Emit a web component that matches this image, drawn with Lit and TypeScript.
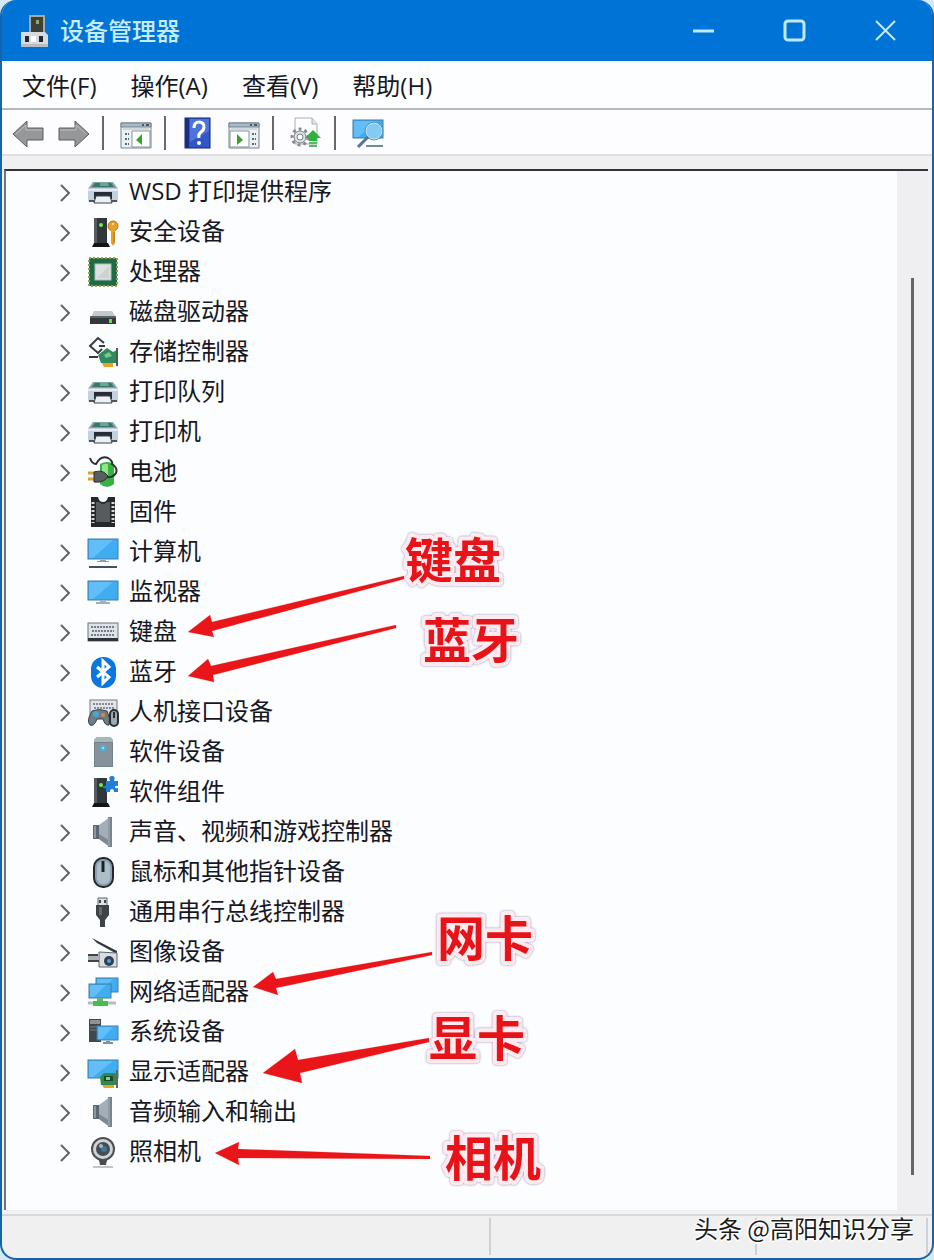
import { LitElement, html, css, svg, type TemplateResult, type SVGTemplateResult } from "lit";
import { customElement, property } from "lit/decorators.js";

const printer = svg`
  <path d="M6 6h20l5 7H1z" fill="#7fa5a3"/><path d="M8 7h16l3 4H5z" fill="#3f7269"/><path d="M13 7h8l1 3h-9z" fill="#5fae8f"/>
  <path d="M1 13q0-1 1-1h28q1 0 1 1v11q0 2-2 2H3q-2 0-2-2z" fill="#c3d1dc"/>
  <path d="M1 14h30" stroke="#e3ebf1" stroke-width="2"/><path d="M2 25h5M25 25h5" stroke="#4c565e" stroke-width="2"/>
  <path d="M7 16h18v7H7z" fill="#262d34"/><path d="M9 20h14l2 7H7z" fill="#eef2f6" stroke="#39424a"/>`;

const screen = (x: number, y: number, w: number, h: number) => svg`
  <rect x=${x} y=${y} width=${w} height=${h} fill="#41adf1" stroke="#3f7da6"/>
  <path d="M${x + 1} ${y + 1}h${w - 6}l-${w - 10} ${h - 2}h-4z" fill="#62bef8"/>`;

const card = svg`
  <path d="M13 21l4-4h11l2 2v10H14z" fill="#2f8a4f"/><path d="M30 14v18" stroke="#5d6a5d" stroke-width="2"/>
  <path d="M17 20h9v5h-9z" fill="#1d4630"/><path d="M19 21h4v3h-4z" fill="#7ed08c"/>
  <path d="M15 29h12v3H17z" fill="#e5a423"/>`;

const tower = svg`
  <path d="M7 2h13v25H7z" fill="#31373b"/><path d="M7 2h3v25H7z" fill="#565d62"/>
  <path d="M7 27h14l2 4H5z" fill="#121518"/><circle cx="14" cy="9" r="2" fill="#6bf23e"/>`;

const speaker = svg`
  <path d="M6 9h6L23 1v30l-11-8H6z" fill="#a3aeb8"/><path d="M6 9h6v14H6z" fill="#5b6874"/><path d="M8 10v12" stroke="#8c98a3" stroke-width="2"/>
  <path d="M12 18l11 7v6l-11-8z" fill="#7d8892"/><path d="M21 1h4v30h-4z" fill="#77828c"/><path d="M22 2v28" stroke="#aeb7bf"/>`;

const keys = svg`
  <rect x="1" y="7" width="30" height="18" fill="#dfe3e8" stroke="#6c7580"/>
  <path d="M4 11h24M5 15h22M4 19h24" stroke="#747d88" stroke-width="2" stroke-dasharray="2 1"/>
  <path d="M1 22h30v3H1z" fill="#2c333b"/>`;

const icons: Record<string, SVGTemplateResult> = {
  printer,
  security: svg`${tower}
    <circle cx="26" cy="10" r="5" fill="#e7a02b" stroke="#b97614"/><circle cx="26" cy="8" r="1" fill="#fff2c9"/>
    <path d="M24 14h4v13l-2 3-2-3z" fill="#e7a02b"/><path d="M27 16v11" stroke="#b97614"/>`,
  cpu: svg`
    <rect x="2" y="2" width="28" height="28" fill="#1f6b48"/>
    <rect x="2" y="2" width="28" height="28" fill="none" stroke="#9aa24c" stroke-width="2" stroke-dasharray="2 2"/>
    <rect x="8" y="8" width="16" height="16" fill="#dfe0e1" stroke="#a7c7b2"/><path d="M10 22L22 10v12z" fill="#cfd2d4"/>`,
  disk: svg`
    <path d="M7 15h18l4 6H4z" fill="#c2c8cc"/><path d="M3 20h26v8H3z" fill="#31393c"/>
    <path d="M3 20h26v2H3z" fill="#59646a"/><path d="M22 23h3v4h-3z" fill="#67dd5a"/>`,
  storage: svg`
    <path d="M17 7l-6-5-8 8 8 7 4-4M12 10h6" fill="none" stroke="#333a40" stroke-width="2"/>
    <path d="M2 21h9" stroke="#333a40" stroke-width="2"/><path d="M11 19l9-7 6 4 4-2v13H14z" fill="#2f8a5e"/>
    <path d="M17 19l5-3 3 4-6 2z" fill="#7cc59c"/><path d="M30 12v18" stroke="#4c5a50" stroke-width="2"/>
    <path d="M15 27h11v4H17z" fill="#e5a423"/>`,
  battery: svg`
    <path d="M13 8q7-4 14 0v20q-7 6-14 0z" fill="#37b13f"/><path d="M15 9q3-2 6-1v11h-6z" fill="#8fe388"/>
    <path d="M3 2q2 6 6 6Q14-1 21 2q5 3 4 6 6 4 4 9-3 5-9 4" fill="none" stroke="#2b3135" stroke-width="2"/>
    <path d="M1 17h7M1 23h7" stroke="#d6a62a" stroke-width="3"/><path d="M7 16q7-2 11 1l3 3-3 4q-5 3-11 2z" fill="#585f63" stroke="#2a2f33"/>`,
  firmware: svg`
    <path d="M4 1h7q1 5 5 5t5-5h7v30H4z" fill="#26292c"/><path d="M9 6h3q4 4 8 0h3v20H9z" fill="#575b5e"/>
    <path d="M6 6v21M26 6v21" stroke="#d6dadd" stroke-width="3" stroke-dasharray="2 2"/>`,
  computer: svg`${screen(1, 3, 30, 20)}<path d="M13 24h6v1h3v1H10v-1h3z" fill="#8aa0ae"/><path d="M2 31h28" stroke="#40525f" stroke-width="2"/>`,
  monitor: svg`${screen(1, 5, 30, 19)}<path d="M13 25h6v1h4v2H9v-2h4z" fill="#a2b0ba"/>`,
  keyboard: keys,
  bluetooth: svg`
    <rect x="4" y="1" width="25" height="31" rx="12" fill="#0a76e0"/>
    <path d="M10 11l12 10-6 6V5l6 6-12 10" fill="none" stroke="#fff" stroke-width="3"/>`,
  hid: svg`
    <rect x="3" y="4" width="27" height="15" fill="#e2e5e8" stroke="#757d86"/>
    <path d="M6 8h21M7 12h20" stroke="#838b94" stroke-width="2" stroke-dasharray="2 1"/>
    <path d="M5 15q7-3 15 0 4 8 2 14-4 1-6-6h-6q-3 8-7 6-4-4 2-14z" fill="#717b85" stroke="#3a4249"/>
    <circle cx="9" cy="18" r="3" fill="#49a5d8"/><circle cx="16" cy="19" r="2" fill="#e0843a"/>
    <rect x="23" y="14" width="8" height="16" rx="4" fill="#9ea8b1" stroke="#272e34" stroke-width="2"/><path d="M27 16v6" stroke="#272e34" stroke-width="2"/>`,
  software: svg`
    <path d="M7 4l3-3h13l3 3v27H7z" fill="#75818a"/><path d="M7 4l3-3h13l3 3v2H7z" fill="#aab4bb"/>
    <path d="M8 7h17v23H8z" fill="#87939c"/><circle cx="16" cy="12" r="3" fill="#42b8e2"/><circle cx="16" cy="12" r="1" fill="#b8effd"/>`,
  component: svg`${tower}
    <path d="M19 5h4q-2-5 2-5t2 5h4v5q-3-1-3 1t3 1v4h-4q0-3-2-3t-2 3h-4v-4q-3 1-3-1t3-1z" fill="#1f7fd6"/>`,
  speaker,
  mouse: svg`
    <rect x="7" y="2" width="19" height="29" rx="9" fill="#8d9eac" stroke="#20272d" stroke-width="2"/>
    <rect x="10" y="5" width="13" height="23" rx="6" fill="#aebdca"/><path d="M16 5v11" stroke="#1c2227" stroke-width="3"/>`,
  usb: svg`
    <path d="M11 2h9v8h-9z" fill="#dfe3e6" stroke="#5e666d"/><path d="M13 4v3M18 4v3" stroke="#3d444a" stroke-width="2"/>
    <path d="M9 9h13v10l-4 5v7h-5v-7l-4-5z" fill="#3d4347"/><path d="M12 11h3v8h-3z" fill="#656c71"/>`,
  imaging: svg`
    <path d="M5 2l25 13v3L10 7z" fill="#34393d"/><path d="M12 16l18 1v14H12z" fill="#d9dde0" stroke="#5d656b"/>
    <path d="M1 19h11v6H1z" fill="#aab1b7"/><path d="M1 19h10M1 25h11" stroke="#3e454b" stroke-width="2"/>
    <circle cx="22" cy="25" r="5" fill="#2d4055"/><circle cx="22" cy="25" r="2" fill="#5f9cd0"/>`,
  network: svg`${screen(9, 2, 22, 14)}${screen(2, 8, 22, 14)}
    <path d="M10 22h6v3h-6z" fill="#69b573"/><path d="M1 27h28" stroke="#b3beb9" stroke-width="3"/><path d="M6 25h15v5H6z" fill="#45bf48"/>`,
  system: svg`
    <path d="M2 3h12v23H2z" fill="#41474b"/><path d="M3 4h10v4H3z" fill="#8b9690"/><path d="M3 11h10M3 14h7" stroke="#7a8286" stroke-width="1"/>
    ${screen(10, 10, 21, 14)}<path d="M19 25h4v1h3v2H16v-2h3z" fill="#7b92a0"/>`,
  display: svg`${screen(1, 4, 30, 18)}${card}`,
  camera: svg`
    <circle cx="16" cy="13" r="11" fill="#d0d2d4" stroke="#4b4f53" stroke-width="2"/>
    <circle cx="16" cy="13" r="7" fill="#454d54"/><circle cx="17" cy="13" r="3" fill="#41769c"/><circle cx="14" cy="10" r="2" fill="#a3b8c7"/>
    <path d="M12 24h8l-1 5h-6z" fill="#4a4e51"/><path d="M6 31h20" stroke="#888d91"/>`,
  back: svg`<path d="M1 17L15 4v7h16v12H15v7z" fill="#969799" stroke="#5a5c5e" stroke-linejoin="round"/><path d="M4 17l10-9v5h16" fill="none" stroke="#bcbdbf"/>`,
  forward: svg`<path d="M31 17L17 4v7H1v12h16v7z" fill="#969799" stroke="#5a5c5e" stroke-linejoin="round"/><path d="M2 13h16V8l10 9" fill="none" stroke="#bcbdbf"/>`,
  paneLeft: svg`
    <path d="M1 6h30v25H1z" fill="#eef1f3" stroke="#74828d"/><path d="M1 6h30v4H1z" fill="#a9b9c7" stroke="#74828d"/><path d="M22 8h2M26 8h3" stroke="#485868" stroke-width="2"/>
    <path d="M3 12h26" stroke="#b5bec6"/><path d="M12 14h18v16H12z" fill="#fff" stroke="#87949e"/><path d="M5 17h4M5 22h4M5 27h4" stroke="#4d6d88" stroke-width="2" stroke-dasharray="2 1"/>
    <path d="M22 17v11l-6-5z" fill="#3aa12d"/>`,
  paneRight: svg`
    <path d="M1 6h30v25H1z" fill="#eef1f3" stroke="#74828d"/><path d="M1 6h30v4H1z" fill="#a9b9c7" stroke="#74828d"/><path d="M22 8h2M26 8h3" stroke="#485868" stroke-width="2"/>
    <path d="M3 12h26" stroke="#b5bec6"/><path d="M2 14h19v16H2z" fill="#fff" stroke="#87949e"/><path d="M24 17h4M24 22h4M24 27h4" stroke="#4d6d88" stroke-width="2" stroke-dasharray="2 1"/>
    <path d="M9 17v11l6-5z" fill="#3aa12d"/>`,
  help: svg`
    <rect x="3" y="1" width="25" height="30" fill="#3156c8" stroke="#15256f"/><path d="M3 1h4v30H3z" fill="#1a2c83"/><path d="M8 2h19v12L8 25z" fill="#4c74dc"/>
    <path d="M12 11q0-6 5-6t5 5q0 3-3 5t-2 6" fill="none" stroke="#fff" stroke-width="3"/><circle cx="17" cy="26" r="2" fill="#fff"/>`,
  update: svg`
    <path d="M5 1h17l5 6v20H5z" fill="#fbfcfc" stroke="#a9b0b4"/><path d="M22 1v6h5" fill="#e1e5e8" stroke="#a9b0b4"/>
    <circle cx="10" cy="20" r="8" fill="none" stroke="#868d92" stroke-width="3" stroke-dasharray="3 3"/><circle cx="10" cy="20" r="6" fill="#dde1e3" stroke="#7c8388"/><circle cx="10" cy="20" r="3" fill="#fff" stroke="#7c8388"/>
    <path d="M23 13l8 8h-4v3h-8v-3h-4z" fill="#2fb140"/><path d="M19 26h8M19 29h8" stroke="#4cc05a" stroke-width="2"/>`,
  scan: svg`${screen(1, 3, 30, 18)}<path d="M14 29h17" stroke="#71899b" stroke-width="2"/>
    <circle cx="22" cy="14" r="8" fill="#83cbf2" stroke="#c5e5f7" stroke-width="1"/><circle cx="22" cy="14" r="9" fill="none" stroke="#5794bd"/>
    <path d="M16 20L6 30" stroke="#56758b" stroke-width="3"/>`,
  app: svg`
    <path d="M12 1h14v19H12z" fill="#3b4038" stroke="#a5a9a8" stroke-width="2"/><path d="M18 5h3v4h-3z" fill="#9ba55b"/>
    <path d="M3 17h24l3 3v12H3z" fill="#d7dbdf"/><path d="M3 29h27v3H3z" fill="#b9bec3"/><path d="M7 21h4v6H7zM21 21h4v6h-4z" fill="#23282e"/><path d="M13 21h5v6h-5z" fill="#fff"/>`,
};

@customElement("dm-icon")
export class DmIcon extends LitElement {
  @property() name = "";

  static styles = css`
    :host { display: block; width: 32px; height: 32px; flex: none; }
    svg { display: block; width: 100%; height: 100%; }
  `;

  render() {
    return html`<svg viewBox="0 0 32 32" aria-hidden="true">${icons[this.name]}</svg>`;
  }
}

const menus = ["文件(F)", "操作(A)", "查看(V)", "帮助(H)"];

const toolbar = [
  [["back", "后退"], ["forward", "前进"]],
  [["paneLeft", "显示/隐藏控制台树"]],
  [["help", "帮助"], ["paneRight", "显示/隐藏操作窗格"]],
  [["update", "更新驱动程序"]],
  [["scan", "扫描检测硬件改动"]],
];

const devices = [
  ["printer", "WSD 打印提供程序"],
  ["security", "安全设备"],
  ["cpu", "处理器"],
  ["disk", "磁盘驱动器"],
  ["storage", "存储控制器"],
  ["printer", "打印队列"],
  ["printer", "打印机"],
  ["battery", "电池"],
  ["firmware", "固件"],
  ["computer", "计算机"],
  ["monitor", "监视器"],
  ["keyboard", "键盘"],
  ["bluetooth", "蓝牙"],
  ["hid", "人机接口设备"],
  ["software", "软件设备"],
  ["component", "软件组件"],
  ["speaker", "声音、视频和游戏控制器"],
  ["mouse", "鼠标和其他指针设备"],
  ["usb", "通用串行总线控制器"],
  ["imaging", "图像设备"],
  ["network", "网络适配器"],
  ["system", "系统设备"],
  ["display", "显示适配器"],
  ["speaker", "音频输入和输出"],
  ["camera", "照相机"],
];

const notes = [
  { text: "键盘", x: 405, y: 578, arrow: "188,632 210,615 212,622 404,576 404,579 212,631 214,637" },
  { text: "蓝牙", x: 423, y: 658, arrow: "188,676 208,659 211,666 396,625 396,628 213,675 214,682" },
  { text: "网卡", x: 437, y: 956, arrow: "253,987 273,972 276,979 432,952 432,955 276,988 278,995" },
  { text: "显卡", x: 429, y: 1056, arrow: "263,1073 295,1049 298,1060 429,1038 429,1042 300,1073 302,1083" },
  { text: "相机", x: 445, y: 1176, arrow: "215,1153 239,1142 238,1149 430,1156 430,1159 238,1158 239,1165" },
];

@customElement("app-root")
export class AppRoot extends LitElement {
  static styles = css`
    :host {
      display: block;
      background: #d3e8f2;
      color: #17171f;
      font: 24px/40px "Open Sans", "Noto Sans CJK SC", sans-serif;
    }
    * { box-sizing: border-box; }
    button { margin: 0; padding: 0; border: 0; background: none; color: inherit; font: inherit; }
    .window {
      position: relative;
      display: flex;
      flex-direction: column;
      min-height: 100vh;
      overflow: hidden;
      border: 2px solid #1765a8;
      border-top: 0;
      border-radius: 16px;
      background: #f0f0f1;
    }
    .title { display: flex; align-items: center; height: 61px; padding: 0 16px; background: #0074d6; color: #c5ecff; }
    .title h1 { flex: 1; margin: 0 0 0 10px; font: inherit; font-weight: 500; }
    .caption { display: flex; gap: 59px; padding-right: 15px; }
    .caption button { width: 32px; height: 32px; }
    .caption svg { display: block; fill: none; stroke: #bdeaff; stroke-width: 3; }
    .menu { display: flex; gap: 34px; height: 49px; padding: 5px 20px 2px; border-bottom: 2px solid #b4b9bd; background: #fdfeff; }
    .tools { display: flex; align-items: center; height: 46px; padding: 2px 10px 0; border-bottom: 2px solid #dddfe1; background: #fdfdff; }
    .group { display: flex; gap: 14px; align-items: center; height: 34px; margin-right: 16px; padding-right: 12px; border-right: 2px solid #6a6670; }
    .group:last-child { border: 0; }
    .body { display: flex; flex: 1; margin: 13px 4px 0 2px; border-top: 2px solid #33343a; border-left: 2px solid #6d7580; background: #fcfdff; }
    .tree { flex: 1; margin: 0; padding: 1px 0 38px 53px; list-style: none; }
    .tree li { display: flex; align-items: center; height: 40px; }
    .expand { width: 12px; height: 40px; margin-right: 16px; }
    .expand svg { display: block; fill: none; stroke: #66626b; stroke-width: 2; }
    .name { margin-left: 10px; padding-bottom: 2px; white-space: pre; }
    .scroll { width: 31px; padding: 107px 14px 35px; background: #efeff1; }
    .thumb { width: 3px; height: 100%; background: #65646c; }
    .status { display: flex; height: 44px; margin-top: 4px; padding: 2px 4px 3px 0; border-top: 2px solid #d5d9e0; }
    .cell { flex: 266; border-right: 2px solid #cfd1d5; }
    .cell.wide { flex: 490; }
    .cell.last { flex: 170; }
    .notes { position: absolute; top: 0; left: -2px; width: 600px; height: 1200px; pointer-events: none; }
    .notes polygon { fill: #ea1519; stroke: #ffd2d2; stroke-width: 1; paint-order: stroke; }
    .notes text {
      fill: #e81318; stroke: #ffebef; stroke-width: 8; stroke-linejoin: round; paint-order: stroke;
      font: 700 48px "Noto Sans CJK SC", sans-serif; filter: drop-shadow(0 0 1px #8c8cb4);
    }
    .credit {
      position: absolute; right: 18px; bottom: 10px; color: #1b1b1b; font: 24px/40px "Noto Sans CJK SC", sans-serif;
      text-shadow: -1px -1px #fff, 1px 1px #fff, -2px 0 #fff, 0 2px #fff;
    }
  `;

  private toolGroup(items: string[][]): TemplateResult {
    return html`<div class="group">
      ${items.map(([icon, label]) => html`<button aria-label=${label} title=${label}><dm-icon name=${icon}></dm-icon></button>`)}
    </div>`;
  }

  private row([icon, label]: string[]): TemplateResult {
    return html`<li role="treeitem" aria-expanded="false">
      <button class="expand" aria-label="展开 ${label}">
        <svg width="12" height="40" viewBox="0 0 12 40"><path d="M2 13l8 8-8 8"/></svg>
      </button>
      <dm-icon name=${icon}></dm-icon><span class="name">${label}</span>
    </li>`;
  }

  render() {
    return html`<div class="window">
      <header class="title">
        <dm-icon name="app"></dm-icon>
        <h1>设备管理器</h1>
        <div class="caption">
          <button aria-label="最小化"><svg width="32" height="32"><path d="M6 16h21"/></svg></button>
          <button aria-label="最大化"><svg width="32" height="32"><rect x="7" y="6" width="19" height="19" rx="3"/></svg></button>
          <button aria-label="关闭"><svg width="32" height="32"><path d="M7 6l19 19M26 6L7 25" stroke-width="2"/></svg></button>
        </div>
      </header>
      <nav class="menu">${menus.map((m) => html`<button>${m}</button>`)}</nav>
      <div class="tools" role="toolbar">${toolbar.map((g) => this.toolGroup(g))}</div>
      <main class="body">
        <ul class="tree" role="tree">${devices.map((d) => this.row(d))}</ul>
        <div class="scroll"><div class="thumb"></div></div>
      </main>
      <footer class="status"><div class="cell wide"></div><div class="cell"></div><div class="cell last"></div></footer>
      <svg class="notes">
        ${notes.map((n) => svg`<polygon points=${n.arrow}></polygon><text x=${n.x} y=${n.y}>${n.text}</text>`)}
      </svg>
      <div class="credit">头条 @高阳知识分享</div>
    </div>`;
  }
}
